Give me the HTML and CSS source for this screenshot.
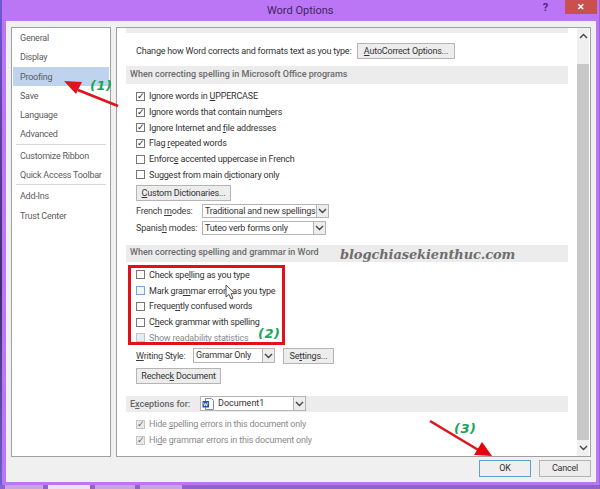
FILE: index.html
```html
<!DOCTYPE html>
<html lang="en">
<head>
<meta charset="utf-8">
<title>Word Options</title>
<link rel="stylesheet" href="styles.css">
</head>
<body>
<div class="desktop">
  <div class="strip"></div>
  <div class="window">
    <header class="titlebar">
      <span class="title">Word Options</span>
      <span class="help">?</span>
      <span class="close">✕</span>
    </header>
    <div class="client">
      <div class="panes">
        <nav class="nav">
          <div class="nav-item">General</div>
          <div class="nav-item">Display</div>
          <div class="nav-item active">Proofing</div>
          <div class="nav-item">Save</div>
          <div class="nav-item">Language</div>
          <div class="nav-item">Advanced</div>
          <div class="nav-sep"></div>
          <div class="nav-item">Customize Ribbon</div>
          <div class="nav-item">Quick Access Toolbar</div>
          <div class="nav-sep"></div>
          <div class="nav-item">Add-Ins</div>
          <div class="nav-item">Trust Center</div>
        </nav>
        <main class="main">
          <div class="content">
            <div class="top-strip"></div>
            <div class="line autocorrect">
              <span>Change how Word corrects and formats text as you type:</span>
              <button class="btn btn-auto"><u>A</u>utoCorrect Options...</button>
            </div>
            <div class="section s1">When correcting spelling in Microsoft Office programs</div>
            <div class="checks c1">
              <label class="check"><span class="box on">✓</span><span>Ignore words in <u>U</u>PPERCASE</span></label>
              <label class="check"><span class="box on">✓</span><span>Ignore words that contain num<u>b</u>ers</span></label>
              <label class="check"><span class="box on">✓</span><span>Ignore Internet and <u>f</u>ile addresses</span></label>
              <label class="check"><span class="box on">✓</span><span>Flag <u>r</u>epeated words</span></label>
              <label class="check"><span class="box"></span><span>Enforc<u>e</u> accented uppercase in French</span></label>
              <label class="check"><span class="box"></span><span>Suggest from main d<u>i</u>ctionary only</span></label>
            </div>
            <button class="btn btn-dict"><u>C</u>ustom Dictionaries...</button>
            <div class="modes">
              <div class="mode"><span class="mode-label">French <u>m</u>odes:</span><span class="select sel-fr"><span class="sel-text">Traditional and new spellings</span><span class="arrow"><svg width="9" height="6" viewBox="0 0 9 6"><path d="M1 1l3.5 3.5L8 1" fill="none" stroke="#444" stroke-width="1.4"/></svg></span></span></div>
              <div class="mode"><span class="mode-label">Spanis<u>h</u> modes:</span><span class="select sel-es"><span class="sel-text">Tuteo verb forms only</span><span class="arrow"><svg width="9" height="6" viewBox="0 0 9 6"><path d="M1 1l3.5 3.5L8 1" fill="none" stroke="#444" stroke-width="1.4"/></svg></span></span></div>
            </div>
            <div class="section s2">When correcting spelling and grammar in Word</div>
            <div class="checks c2">
              <label class="check"><span class="box"></span><span>Check spe<u>l</u>ling as you type</span></label>
              <label class="check"><span class="box hover"></span><span>Mark gra<u>m</u>mar errors as you type</span></label>
              <label class="check"><span class="box"></span><span>Freque<u>n</u>tly confused words</span></label>
              <label class="check"><span class="box"></span><span>C<u>h</u>eck grammar with spelling</span></label>
              <label class="check muted"><span class="box dis"></span><span>Show readabi<u>l</u>ity statistics</span></label>
            </div>
            <div class="style-row">
              <span class="style-label"><u>W</u>riting Style:</span>
              <span class="select sel-style"><span class="sel-text">Grammar Only</span><span class="arrow"><svg width="9" height="6" viewBox="0 0 9 6"><path d="M1 1l3.5 3.5L8 1" fill="none" stroke="#444" stroke-width="1.4"/></svg></span></span>
              <button class="btn btn-set">Se<u>t</u>tings...</button>
            </div>
            <button class="btn btn-recheck">Rechec<u>k</u> Document</button>
            <div class="section s3">
              <span class="exc-label">E<u>x</u>ceptions for:</span>
              <span class="select sel-doc">
                <svg class="doc" width="12" height="12" viewBox="0 0 12 12"><path d="M3.5.5h6l2 2v9h-8z" fill="#fff" stroke="#7d8fa8"/><rect x=".5" y="3" width="6.5" height="6.5" fill="#2b5797"/><path d="M1.6 4.5l1 3.5 1-2.6 1 2.6 1-3.5" fill="none" stroke="#fff" stroke-width=".8"/></svg>
                <span class="sel-text">Document1</span><span class="arrow"><svg width="9" height="6" viewBox="0 0 9 6"><path d="M1 1l3.5 3.5L8 1" fill="none" stroke="#444" stroke-width="1.4"/></svg></span>
              </span>
            </div>
            <div class="checks c3">
              <label class="check muted"><span class="box dis on">✓</span><span>Hide <u>s</u>pelling errors in this document only</span></label>
              <label class="check muted"><span class="box dis on">✓</span><span>Hi<u>d</u>e grammar errors in this document only</span></label>
            </div>
          </div>
          <div class="scrollbar">
            <span class="sb-btn"><svg width="9" height="6" viewBox="0 0 9 6"><path d="M1 5l3.5-3.5L8 5" fill="none" stroke="#444" stroke-width="1.4"/></svg></span>
            <span class="sb-track"><span class="sb-thumb"></span></span>
            <span class="sb-btn"><svg width="9" height="6" viewBox="0 0 9 6"><path d="M1 1l3.5 3.5L8 1" fill="none" stroke="#444" stroke-width="1.4"/></svg></span>
          </div>
        </main>
      </div>
      <footer class="footer">
        <button class="btn btn-ok">OK</button>
        <button class="btn btn-cancel">Cancel</button>
      </footer>
    </div>
  </div>
  <div class="tabs">
    <span class="tab t1"></span><span class="tab t2"></span><span class="tab t3"></span><span class="tab t4"></span>
  </div>

  <div class="redbox"></div>
  <span class="note n1">(1)</span>
  <span class="note n2">(2)</span>
  <span class="note n3">(3)</span>
  <span class="watermark">blogchiasekienthuc.com</span>
  <svg class="cursor" width="11" height="17" viewBox="0 0 11 17"><path d="M1 1v12l3-2.6 2 4.6 2-.9-2-4.4h4z" fill="#fff" stroke="#555" stroke-width="1"/></svg>
  <svg class="arrows" width="600" height="489" viewBox="0 0 600 489">
    <path d="M118 106L78 90" stroke="#e0141c" stroke-width="2.6" fill="none"/>
    <path d="M64 81L82 82L76 94z" fill="#e0141c"/>
    <path d="M430 421L480 451" stroke="#e0141c" stroke-width="2.6" fill="none"/>
    <path d="M492 456L474 455L482 442z" fill="#e8000c"/>
  </svg>
</div>
</body>
</html>
```

FILE: styles.css
```css
* { box-sizing: border-box; }
html, body { margin: 0; padding: 0; }
body {
  width: 600px;
  height: 489px;
  overflow: hidden;
  background: #8a5cc0;
  font-family: Roboto, "Liberation Sans", sans-serif;
  font-size: 9px;
  letter-spacing: -.2px;
  color: #3a3a3a;
}
u { text-underline-offset: 1px; }
.desktop {
  position: relative;
  width: 600px;
  height: 489px;
  display: grid;
  grid-template-columns: 2px 598px;
  grid-template-rows: 485px 4px;
}
.strip { background: linear-gradient(#6d5bd0, #5a3f9a 30%, #3e2a6e 60%, #6a63c8); }
.window {
  background: #bb76f6;
  display: flex;
  flex-direction: column;
  border-right: 1px solid #9a66d8;
  padding: 0 3px 3px 4px;
}
.titlebar {
  height: 21px;
  flex: none;
  position: relative;
  display: flex;
  justify-content: flex-end;
  align-items: flex-start;
}
.title {
  position: absolute;
  left: 261px;
  top: 2px;
  font-size: 11px;
  letter-spacing: 0;
  line-height: 17px;
  color: #43245f;
}
.help {
  font-size: 11px;
  font-weight: 700;
  color: #4a2a7c;
  margin: 1px 17px 0 0;
  line-height: 14px;
}
.close {
  width: 32px;
  height: 14px;
  margin-right: -1px;
  background: #c9504f;
  color: #fff;
  font-size: 9px;
  font-weight: 700;
  line-height: 14px;
  text-align: center;
}
.client {
  flex: 1;
  min-height: 0;
  background: #f0f0f0;
  padding: 6px 5px 0 5px;
  display: flex;
  flex-direction: column;
}
.panes {
  display: flex;
  gap: 5px;
  height: 430px;
  flex: none;
}
.nav {
  width: 100px;
  flex: none;
  background: #fff;
  border: 1px solid #a0a0a0;
  padding: 0 1px 0;
  color: #5c5c5c;
}
.nav-item {
  height: 19.3px;
  line-height: 20px;
  padding-left: 7px;
  white-space: nowrap;
  letter-spacing: -.25px;
}
.nav-item.active { background: #bfd3ee; }
.nav-sep {
  height: 1px;
  background: #d8d8d8;
  margin: 0 3px 1px;
}
.main {
  flex: 1;
  min-width: 0;
  background: #fff;
  border: 1px solid #a0a0a0;
  display: flex;
  padding-right: 1px;
}
.content {
  flex: 1;
  min-width: 0;
  padding: 0 9px 0 9px;
  white-space: nowrap;
}
.top-strip { height: 5px; background: #ececec; }
.line.autocorrect {
  display: flex;
  align-items: center;
  justify-content: space-between;
  padding: 7px 113px 0 10px;
  height: 28px;
  color: #333;
  line-height: 16px;
}
.section {
  background: #ececec;
  color: #6a6a6a;
  font-weight: 500;
  letter-spacing: 0;
  padding-left: 4px;
  white-space: nowrap;
}
.s1 { height: 18px; line-height: 17px; margin-top: 5px; }
.s2 { height: 17px; line-height: 15px; margin-top: 10px; }
.s3 {
  height: 16px;
  margin-top: 12px;
  display: flex;
  align-items: center;
  font-weight: 400;
}
.exc-label { font-weight: 500; width: 70px; flex: none; color: #666; }
.checks { padding-left: 10px; display: flex; flex-direction: column; }
.check {
  display: flex;
  align-items: center;
  height: 15.7px;
  gap: 4px;
  color: #333;
}
.c1 { margin-top: 4.5px; }
.c2 { margin-top: 5px; }
.c3 { margin-top: 5px; }
.box {
  width: 9px;
  height: 9px;
  border: 1px solid #777;
  background: #fff;
  flex: none;
  font-size: 9px;
  line-height: 7px;
  text-align: center;
  font-weight: 700;
  color: #222;
  overflow: visible;
  font-family: "DejaVu Sans", sans-serif;
}
.box.hover { border-color: #6fa8d8; background: #eef6fc; }
.box.dis { border-color: #c4c4c4; background: #eaeaea; color: #666; }
.check.muted { color: #8a8a8a; }
.btn {
  display: block;
  font: inherit;
  letter-spacing: inherit;
  color: #333;
  background: #ededed;
  border: 1px solid #b4b4b4;
  padding: 0;
  text-align: center;
  white-space: nowrap;
}
.btn-auto { width: 98px; height: 16px; line-height: 14px; }
.btn-dict { width: 95px; height: 16px; line-height: 14px; margin: 2.5px 0 0 10px; }
.modes { margin: 3px 0 0 10px; display: flex; flex-direction: column; gap: 3px; }
.mode { display: flex; align-items: center; height: 14px; }
.mode-label { width: 66px; flex: none; }
.select {
  display: inline-flex;
  align-items: stretch;
  background: #fff;
  border: 1px solid #b4b4b4;
  color: #333;
  line-height: 12px;
  font-weight: 400;
}
.sel-text { flex: 1; padding-left: 2px; white-space: nowrap; overflow: hidden; }
.arrow {
  flex: none;
  width: 13px;
  margin: -1px -1px -1px 0;
  background: #ededed;
  border: 1px solid #b4b4b4;
  display: flex;
  align-items: center;
  justify-content: center;
}
.sel-fr { width: 127px; height: 14px; }
.sel-es { width: 124px; height: 14px; }
.sel-style { width: 82px; height: 15px; }
.sel-doc { width: 106px; height: 15px; }
.sel-doc .sel-text { padding-left: 4px; }
.doc { flex: none; margin: 1px 0 0 1px; }
.style-row { display: flex; align-items: center; margin: 2px 0 0 10px; height: 16px; }
.style-label { width: 57px; flex: none; }
.btn-set { width: 51px; height: 16px; line-height: 14px; margin-left: 8px; }
.btn-recheck { width: 85px; height: 16px; line-height: 14px; margin: 4px 0 0 10px; }
.scrollbar {
  width: 12px;
  flex: none;
  background: #f0f0f0;
  display: flex;
  flex-direction: column;
  align-items: center;
}
.sb-btn { height: 16px; flex: none; display: flex; align-items: center; justify-content: center; }
.sb-track { flex: 1; width: 100%; padding-top: 20px; display: flex; }
.sb-thumb { flex: 1; background: #c8c8c8; }
.footer {
  flex: 1;
  display: flex;
  justify-content: flex-end;
  align-items: flex-start;
  gap: 8px;
  padding: 3px 0 0 0;
}
.btn-ok { width: 52px; height: 17px; line-height: 15px; border-color: #5aa2cc; background: #efefef; }
.btn-cancel { width: 52px; height: 17px; line-height: 15px; }
.tabs {
  grid-column: 1 / -1;
  display: flex;
  background: #8f63c8;
  padding: 0 0 0 5px;
  gap: 5px;
}
.tab { height: 4px; background: #c4a6e6; }
.t1 { width: 38px; }
.t2 { width: 42px; background: #ebe2f5; }
.t3 { width: 40px; }
.t4 { width: 42px; }

.redbox {
  position: absolute;
  left: 128px;
  top: 265px;
  width: 157px;
  height: 80px;
  border: 3px solid #e21018;
}
.note {
  position: absolute;
  color: #18a558;
  font-weight: 700;
  font-style: italic;
  font-size: 13px;
  line-height: 15px;
  font-family: "DejaVu Sans", sans-serif;
  letter-spacing: .5px;
}
.n1 { left: 90px; top: 78px; }
.n2 { left: 258px; top: 326px; }
.n3 { left: 454px; top: 421px; }
.watermark {
  position: absolute;
  left: 340px;
  top: 246px;
  font-family: "DejaVu Serif", serif;
  font-style: italic;
  font-weight: 700;
  font-size: 13px;
  line-height: 18px;
  letter-spacing: -.1px;
  color: #6e6e6e;
  white-space: nowrap;
}
.cursor { position: absolute; left: 225px; top: 284px; }
.arrows { position: absolute; left: 0; top: 0; pointer-events: none; }
```
